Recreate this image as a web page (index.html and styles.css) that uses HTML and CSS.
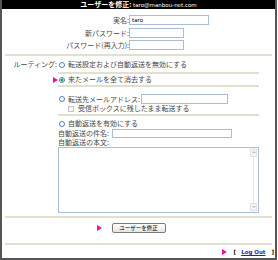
FILE: index.html
```html
<!DOCTYPE html>
<html>
  <head>
    <meta http-equiv="Content-type" content="text/html; charset=utf-8">
    <title>ユーザーを修正</title>
    <link rel="stylesheet" href="styles.css">
  </head>
  <body>
    <div class="panel">
      <div class="head"><b>ユーザーを修正:</b> <span class="mail">taro@manbou-net.com</span></div>

      <div class="account">
        <label>実名:</label><input class="field w80" type="text" value="taro">
        <label>新パスワード:</label><input class="field w55" type="password">
        <label>パスワード(再入力):</label><input class="field w55" type="password">
      </div>

      <div class="route">
        <div class="route_label">ルーティング:</div>
        <div class="opt opt1 sep">
          <div class="line"><span class="radio"></span>転送設定および自動返送を無効にする</div>
        </div>

        <div class="mark"><i class="arrow"></i></div>
        <div class="opt opt2 sep">
          <div class="line"><span class="radio on"></span>来たメールを全て消去する</div>
        </div>

        <div></div>
        <div class="opt opt3 sep">
          <div class="line tall"><span class="radio"></span>転送先メールアドレス:<input class="field w87" type="text"></div>
          <div class="line sub"><span class="check"></span>受信ボックスに残したまま転送する</div>
        </div>

        <div></div>
        <div class="opt opt4">
          <div class="line"><span class="radio"></span>自動返送を有効にする</div>
          <div class="line tall">自動返送の件名:<input class="field w120 subj" type="text"></div>
          <div class="line">自動返送の本文:</div>
          <div class="memo">
            <textarea></textarea>
            <div class="scroll"><span class="up"></span><span class="down"></span></div>
          </div>
        </div>
      </div>

      <div class="submit">
        <i class="arrow go"></i>
        <button type="button">ユーザーを修正</button>
        <span></span>
      </div>

      <div class="logout">
        <i class="arrow"></i>
        <span class="br1">[</span>
        <a href="#">Log Out</a>
        <span class="br2">]</span>
      </div>
    </div>
  </body>
</html>
```

FILE: styles.css
```css
body{margin:0; background:#fff; font-family:"Noto Sans CJK JP", sans-serif; font-size:7px; color:#4a4a4a;}
.panel{width:277px; box-sizing:border-box; border:2px solid #555; border-top:0;}
.head{height:9px; line-height:9px; background:#000; color:#fff; text-align:center; white-space:nowrap;}
.head .mail{font-family:"DejaVu Sans", sans-serif; font-size:5.5px;}

/* account */
.account{margin:0 3px; padding:6px 0 4px; display:grid; grid-template-columns:124px auto; justify-content:start; align-items:center; row-gap:2.5px; border-bottom:2px solid #e2dfd0;}
.account label{text-align:right; line-height:10px; white-space:nowrap;}
.field{height:10px; box-sizing:border-box; margin:0; padding:0 2px; border:1px solid #a9bdd6; font:5.5px "DejaVu Sans", sans-serif; color:#000; outline:none; background:#fff;}
.w80{width:80px;}
.w55{width:55px;}
.w87{width:87px; margin-left:1px;}
.w120{width:120px; height:9px;}
.subj{margin-left:3px;}

/* routing */
.route{margin:0 3px; display:grid; grid-template-columns:53px 201px; border-bottom:2px solid #e2dfd0;}
.route_label{text-align:right; padding:4px 1px 0 0; line-height:9px; white-space:nowrap;}
.mark{display:flex; justify-content:flex-end; padding-top:3px;}
.opt{line-height:9px;}
.sep{border-bottom:2px solid #e2dfd0;}
.opt1{padding:4px 0 3px;}
.opt2{padding:1px 0 1px;}
.opt3{padding:7px 0 1px;}
.opt4{padding:3px 0 3px;}
.line{display:flex; align-items:center; white-space:nowrap;}
.line.tall{height:10px;}
.line.sub{padding-left:10px;}
.radio{width:6px; height:6px; box-sizing:border-box; margin:0 3px 0 1px; border:1px solid #4d7fc0; border-radius:50%; background:#fff;}
.radio.on{background:radial-gradient(circle, #35a035 0 1.2px, #fff 1.8px);}
.check{width:6px; height:6px; box-sizing:border-box; margin-right:4px; border:1px solid #c4c4c4; background:#fafafa;}

.memo{height:66px; box-sizing:border-box; display:flex; border:1px solid #a9bdd6; background:#fff;}
.memo textarea{flex:1; border:0; margin:0; padding:0; resize:none; outline:none; background:transparent;}
.scroll{width:7px; display:flex; flex-direction:column; justify-content:space-between; padding:1px 1px 1px 0; background:linear-gradient(90deg,#fff 3px,#e6e6e6 3px,#e6e6e6 4px,#fff 4px);}
.scroll span{height:6px; border:1px solid #dde3ea; background:#f3f5f8; position:relative;}
.scroll .up:after,.scroll .down:after{content:""; position:absolute; left:1px; border-left:2px solid transparent; border-right:2px solid transparent;}
.scroll .up:after{top:1px; border-bottom:2px solid #b9c2cc;}
.scroll .down:after{top:2px; border-top:2px solid #b9c2cc;}

/* arrows */
.arrow{display:block; width:0; height:0; border-left:5px solid #f0109c; border-top:3px solid transparent; border-bottom:3px solid transparent;}

/* submit */
.submit{margin:0 3px; padding:5px 0 10px; display:grid; grid-template-columns:1fr auto 1fr; align-items:center; border-bottom:2px solid #e2dfd0;}
.submit .go{justify-self:end; margin-right:10px;}
.submit button{width:54px; height:10px; padding:0; border:1px solid #7b7b7b; border-radius:2px; background:linear-gradient(#fff,#e6e6de); font:5.5px "Noto Sans CJK JP", sans-serif; color:#000;}

/* logout */
.logout{height:13px; padding:1px 1px 0 0; box-sizing:border-box; display:flex; justify-content:flex-end; align-items:center; font:bold 5.5px "DejaVu Sans", sans-serif; color:#000;}
.logout .arrow{margin-right:7px;}
.logout .br1{margin-right:5px;}
.logout a{color:#1a22d0; text-decoration:underline; margin-right:6px;}
```
